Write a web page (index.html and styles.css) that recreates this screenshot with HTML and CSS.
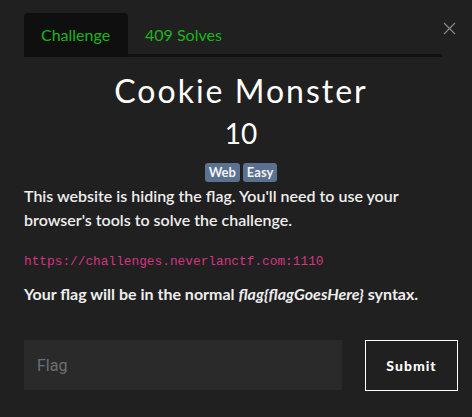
FILE: index.html
```html
<!DOCTYPE html>
<html>
<head>
<meta charset="utf-8">
<link rel="stylesheet" href="styles.css">
</head>
<body>
<div class="modal">
  <div class="header">
    <nav class="tabs">
      <span class="tab active">Challenge</span>
      <span class="tab">409 Solves</span>
    </nav>
    <button class="close" aria-label="Close">
      <svg width="13" height="13" viewBox="0 0 13 13"><path d="M1 1L12 12M12 1L1 12" stroke="#8a8a8a" stroke-width="1.1" fill="none"/></svg>
    </button>
  </div>
  <div class="body">
    <h1 class="title">Cookie Monster</h1>
    <div class="points">10</div>
    <div class="tags"><span class="tag">Web</span><span class="tag">Easy</span></div>
    <p class="desc">This website is hiding the flag. You'll need to use your browser's tools to solve the challenge.</p>
    <p class="url"><code>https://challenges.neverlanctf.com:1110</code></p>
    <p class="desc note">Your flag will be in the normal <em>flag{flagGoesHere}</em> syntax.</p>
    <form class="submit-row">
      <input class="flag" type="text" placeholder="Flag">
      <button class="submit" type="button">Submit</button>
    </form>
  </div>
</div>
</body>
</html>
```
FILE: styles.css
```css
html, body {
  margin: 0;
  padding: 0;
  background: #202020;
  height: 100%;
}
.modal {
  padding: 13px 14px 0 24px;
  font-family: "Lato", sans-serif;
  color: #eeeeee;
}
.header {
  display: flex;
  align-items: flex-start;
}
.tabs {
  flex: 1;
  display: flex;
  border-bottom: 3px solid #111111;
  height: 41px;
}
.tab {
  display: block;
  padding: 0 17px;
  height: 44px;
  line-height: 44px;
  font-size: 16px;
  color: #1cb51c;
  box-sizing: border-box;
}
.tab.active {
  background: #0f0f0f;
  border-radius: 4px 4px 0 0;
  width: 104px;
}
.close {
  background: none;
  border: 0;
  padding: 0;
  margin: 8px 2px 0 0;
  width: 14px;
  height: 14px;
  display: flex;
  align-items: center;
  justify-content: flex-end;
}
.body {
  display: flex;
  flex-direction: column;
}
.title {
  margin: 14px 0 0;
  text-align: center;
  font-weight: 400;
  font-size: 32px;
  line-height: 40px;
  letter-spacing: 2px;
  color: #ffffff;
}
.points {
  text-align: center;
  font-size: 28px;
  line-height: 34px;
  color: #ffffff;
  margin-top: 5px;
}
.tags {
  display: flex;
  justify-content: center;
  gap: 3px;
  margin-top: 13px;
}
.tag {
  background: #5b7190;
  color: #f2f2f2;
  font-weight: 700;
  font-size: 13px;
  line-height: 19px;
  padding: 0 4px;
  border-radius: 3px;
}
.desc {
  margin: 2px 0 0;
  font-size: 16px;
  font-weight: 600;
  line-height: 24px;
  color: #eeeeee;
}
.url {
  margin: 17px 0 0;
  line-height: 20px;
}
.url code {
  font-family: "Liberation Mono", monospace;
  font-size: 12.8px;
  color: #d63384;
}
.desc.note {
  margin-top: 10px;
  font-weight: 700;
}
.submit-row {
  display: flex;
  margin-top: 34px;
  gap: 23px;
}
.flag {
  width: 318px;
  height: 50px;
  box-sizing: border-box;
  background: #2a2a2a;
  border: 0;
  padding: 0 13px;
  font-family: "Roboto", sans-serif;
  font-size: 16px;
  color: #ddd;
}
.flag::placeholder {
  color: #6c7075;
}
.submit {
  width: 93px;
  height: 51px;
  box-sizing: border-box;
  background: transparent;
  border: 1px solid #ffffff;
  color: #ffffff;
  font-family: "Lato", sans-serif;
  font-weight: 900;
  font-size: 14px;
  letter-spacing: 1px;
}
```
